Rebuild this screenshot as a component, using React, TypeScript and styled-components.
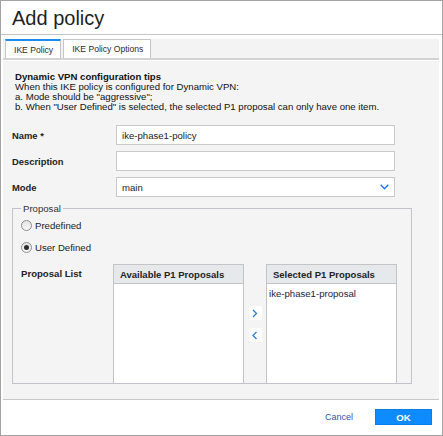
import styled, { createGlobalStyle } from 'styled-components';

const GlobalStyle = createGlobalStyle`
  html, body {
    margin: 0;
    padding: 0;
    background: #ffffff;
  }
  body {
    font-family: "Liberation Sans", Arial, sans-serif;
    color: #1e1e1e;
  }
`;

const Dialog = styled.div`
  width: 443px;
  height: 436px;
  box-sizing: border-box;
  border: 1px solid #a3a3a3;
  background: #ffffff;
  display: flex;
  flex-direction: column;
`;

const Header = styled.div`
  height: 34px;
  flex-shrink: 0;
  box-sizing: border-box;
  border-bottom: 1px solid #c4c4c4;
  padding: 1px 0 0 11px;
  display: flex;
  align-items: center;
  font-size: 20px;
  color: #1f1f1f;
`;

const Body = styled.div`
  flex: 1;
  display: flex;
  flex-direction: column;
  padding: 4px 3px 0 2px;
  min-height: 0;
`;

const TabBar = styled.div`
  height: 19px;
  flex-shrink: 0;
  display: flex;
  gap: 2px;
  padding-left: 2px;
  background: #f3f3f3;
  border-bottom: 2px solid #d3d3d3;
`;

const Tab = styled.div<{ $active?: boolean }>`
  box-sizing: border-box;
  height: 19px;
  padding: 0 7px 0 8px;
  display: flex;
  align-items: center;
  font-size: 8.6px;
  color: #2a2a2a;
  background: #ffffff;
  border: 1px solid #c6c6c6;
  border-bottom: none;
  border-top: ${({ $active }) => ($active ? '2px solid #1b8cf0' : '1px solid #c6c6c6')};
`;

const Panel = styled.div`
  flex: 1;
  background: #f4f4f4;
  padding: 11px 0 0 9px;
  margin-top: 1px;
`;

const Tips = styled.div`
  margin-left: 3px;
  font-size: 9.6px;
  line-height: 10px;
  color: #111111;
`;

const TipsTitle = styled.div`
  font-weight: bold;
`;

const Form = styled.div`
  margin-top: 13px;
  display: flex;
  flex-direction: column;
  gap: 6px;
`;

const Row = styled.div`
  display: flex;
  align-items: center;
  height: 20px;
`;

const Label = styled.div`
  width: 104px;
  font-size: 9.4px;
  font-weight: bold;
  color: #222222;
`;

const Field = styled.div`
  width: 279px;
  height: 20px;
  box-sizing: border-box;
  border: 1px solid #c9c9c9;
  background: #ffffff;
  padding: 0 5px;
  display: flex;
  align-items: center;
  justify-content: space-between;
  font-size: 9.6px;
  color: #222222;
`;

const Fieldset = styled.fieldset`
  width: 400px;
  box-sizing: border-box;
  margin: 6px 0 0 0;
  border: 1px solid #c3c3cf;
  padding: 0 0 0 8px;
  min-width: 0;
`;

const Legend = styled.legend`
  font-size: 9.6px;
  color: #333333;
  padding: 0 2px;
`;

const RadioRow = styled.label`
  height: 22px;
  display: flex;
  align-items: center;
  gap: 3px;
  font-size: 9.6px;
  color: #222222;
`;

const Radio = styled.span<{ $checked?: boolean }>`
  width: 11px;
  height: 11px;
  box-sizing: border-box;
  border-radius: 50%;
  border: 1px solid #8c8c8c;
  background: linear-gradient(#e4e4e4, #f8f8f8);
  display: flex;
  align-items: center;
  justify-content: center;

  &::after {
    content: '';
    width: 5px;
    height: 5px;
    border-radius: 50%;
    background: ${({ $checked }) => ($checked ? '#2c2c2c' : 'transparent')};
  }
`;

const ProposalRow = styled.div`
  margin-top: 6px;
  display: flex;
  align-items: flex-start;
`;

const ProposalLabel = styled.div`
  width: 92px;
  line-height: 19px;
  font-size: 9.6px;
  font-weight: bold;
  color: #222222;
`;

const ListBox = styled.div`
  width: 131px;
  height: 119px;
  box-sizing: border-box;
  border: 1px solid #c4c4c4;
  border-bottom: none;
  background: #ffffff;
`;

const ListHeader = styled.div`
  height: 19px;
  box-sizing: border-box;
  background: #e5e9ec;
  border-bottom: 1px solid #c4c4c4;
  padding-left: 6px;
  display: flex;
  align-items: center;
  font-size: 9.5px;
  font-weight: bold;
  color: #222222;
`;

const ListItem = styled.div`
  padding: 4px 0 0 2px;
  font-size: 9.6px;
  color: #1c1c3a;
`;

const Mover = styled.div`
  width: 22px;
  padding-top: 42px;
  display: flex;
  flex-direction: column;
  align-items: center;
  gap: 8px;
`;

const MoveButton = styled.button`
  width: 13px;
  height: 14px;
  padding: 0;
  border: none;
  background: #ffffff;
  display: flex;
  align-items: center;
  justify-content: center;
  cursor: pointer;
`;

const Footer = styled.div`
  height: 36px;
  flex-shrink: 0;
  box-sizing: border-box;
  border-top: 1px solid #c8c8c8;
  background: #ffffff;
  display: flex;
  align-items: center;
  justify-content: flex-end;
  padding: 0 7px 1px 0;
`;

const CancelButton = styled.button`
  background: none;
  border: none;
  padding: 0;
  margin-right: 22px;
  font-family: inherit;
  font-size: 9px;
  color: #3552b0;
  cursor: pointer;
`;

const OkButton = styled.button`
  width: 57px;
  height: 16px;
  padding: 0;
  border: 1px solid #0a7fe6;
  background: #0d8bff;
  color: #ffffff;
  font-family: inherit;
  font-size: 9.6px;
  font-weight: bold;
  cursor: pointer;
`;

const Chevron = ({ dir }: { dir: 'down' | 'left' | 'right' }) => {
  if (dir === 'down') {
    return (
      <svg width="9" height="6" viewBox="0 0 9 6">
        <polyline points="0.7,0.8 4.5,4.8 8.3,0.8" fill="none" stroke="#1a73e8" strokeWidth="1.3" />
      </svg>
    );
  }
  const pts = dir === 'right' ? '1,1 4.5,4.5 1,8' : '4.5,1 1,4.5 4.5,8';
  return (
    <svg width="6" height="9" viewBox="0 0 6 9">
      <polyline points={pts} fill="none" stroke="#2a7fd6" strokeWidth="1.3" />
    </svg>
  );
};

export default function App() {
  return (
    <>
      <GlobalStyle />
      <Dialog>
        <Header>Add policy</Header>
        <Body>
          <TabBar>
            <Tab $active>IKE Policy</Tab>
            <Tab>IKE Policy Options</Tab>
          </TabBar>
          <Panel>
            <Tips>
              <TipsTitle>Dynamic VPN configuration tips</TipsTitle>
              <div>When this IKE policy is configured for Dynamic VPN:</div>
              <div>a. Mode should be "aggressive";</div>
              <div>b. When "User Defined" is selected, the selected P1 proposal can only have one item.</div>
            </Tips>
            <Form>
              <Row>
                <Label>Name *</Label>
                <Field>ike-phase1-policy</Field>
              </Row>
              <Row>
                <Label>Description</Label>
                <Field />
              </Row>
              <Row>
                <Label>Mode</Label>
                <Field>
                  <span>main</span>
                  <Chevron dir="down" />
                </Field>
              </Row>
            </Form>
            <Fieldset>
              <Legend>Proposal</Legend>
              <RadioRow>
                <Radio />
                Predefined
              </RadioRow>
              <RadioRow>
                <Radio $checked />
                User Defined
              </RadioRow>
              <ProposalRow>
                <ProposalLabel>Proposal List</ProposalLabel>
                <ListBox>
                  <ListHeader>Available P1 Proposals</ListHeader>
                </ListBox>
                <Mover>
                  <MoveButton>
                    <Chevron dir="right" />
                  </MoveButton>
                  <MoveButton>
                    <Chevron dir="left" />
                  </MoveButton>
                </Mover>
                <ListBox>
                  <ListHeader>Selected P1 Proposals</ListHeader>
                  <ListItem>ike-phase1-proposal</ListItem>
                </ListBox>
              </ProposalRow>
            </Fieldset>
          </Panel>
          <Footer>
            <CancelButton>Cancel</CancelButton>
            <OkButton>OK</OkButton>
          </Footer>
        </Body>
      </Dialog>
    </>
  );
}
